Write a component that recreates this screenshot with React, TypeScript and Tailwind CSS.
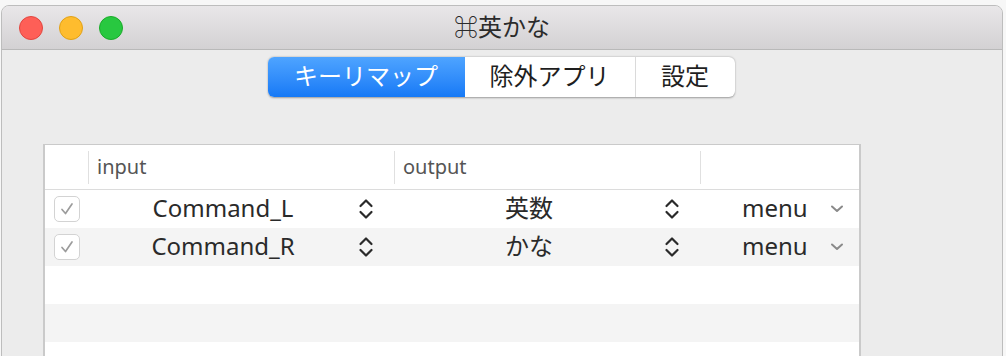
import React from "react";

const font = { fontFamily: '"Noto Sans", "Noto Sans CJK JP", sans-serif' };

function Stepper() {
  return (
    <svg width="16" height="28" viewBox="0 0 16 28" className="shrink-0">
      <path d="M2.5 11 L8 5.5 L13.5 11" fill="none" stroke="#2a2a2a" strokeWidth="2.2" strokeLinecap="round" strokeLinejoin="round" />
      <path d="M2.5 17 L8 22.5 L13.5 17" fill="none" stroke="#2a2a2a" strokeWidth="2.2" strokeLinecap="round" strokeLinejoin="round" />
    </svg>
  );
}

function Chevron() {
  return (
    <svg width="14" height="10" viewBox="0 0 14 10" className="shrink-0 ml-[22px]">
      <path d="M2 2.5 L7 7 L12 2.5" fill="none" stroke="#8a8a8a" strokeWidth="2" strokeLinecap="round" strokeLinejoin="round" />
    </svg>
  );
}

function Check() {
  return (
    <div className="w-[26px] h-[26px] rounded-[5px] border border-[#d3d3d3] bg-white flex items-center justify-center">
      <svg width="18" height="18" viewBox="0 0 18 18">
        <path d="M4 9.5 L7.5 13.5 L14 4" fill="none" stroke="#9c9c9c" strokeWidth="1.7" strokeLinecap="round" strokeLinejoin="round" />
      </svg>
    </div>
  );
}

function Row({ input, output, bg }: { input: string; output: string; bg: string }) {
  return (
    <div className={`flex h-[38px] items-center ${bg}`}>
      <div className="w-[43px] flex justify-center items-center">
        <Check />
      </div>
      <div className="w-[306px] flex items-center pr-[20px]">
        <div className="flex-1 text-center text-[24px] text-[#2a2a2a] pb-[2px]">{input}</div>
        <Stepper />
      </div>
      <div className="w-[306px] flex items-center pr-[20px]">
        <div className="flex-1 text-center text-[24px] text-[#2a2a2a] pb-[2px]">{output}</div>
        <Stepper />
      </div>
      <div className="flex-1 flex items-center pl-[42px]">
        <div className="text-[24px] text-[#2a2a2a] pb-[2px]">menu</div>
        <Chevron />
      </div>
    </div>
  );
}

export default function App() {
  return (
    <div className="w-[1006px] h-[356px] bg-[#f7f7f7] overflow-hidden pt-[5px] pl-[1px] pr-[3px]" style={font}>
      <div className="h-[400px] rounded-t-[8px] border border-[#bdbdbd] bg-[#ececec] overflow-hidden">
        <div className="h-[44px] bg-gradient-to-b from-[#e9e7e9] to-[#d3d1d3] border-b border-[#b9b9b9] relative flex items-center justify-center">
          <div className="absolute left-[17px] top-[10px] flex gap-[16px]">
            <div className="w-[24px] h-[24px] rounded-full bg-[#fe5f57] border border-[#e2463f]" />
            <div className="w-[24px] h-[24px] rounded-full bg-[#febc2e] border border-[#e1a116]" />
            <div className="w-[24px] h-[24px] rounded-full bg-[#28c840] border border-[#1aab29]" />
          </div>
          <div className="text-[24px] text-[#2b2b2b] pb-[1px]">⌘英かな</div>
        </div>
        <div className="flex justify-center pt-[7px] pr-[2px]">
          <div className="flex h-[40px] rounded-[6px] bg-white shadow-[0_0.5px_2px_rgba(0,0,0,0.35)] overflow-hidden text-[24px]">
            <div className="w-[197px] flex items-center justify-center text-white bg-gradient-to-b from-[#4ea4ff] to-[#1579f6] pb-[2px]">キーリマップ</div>
            <div className="w-[171px] flex items-center justify-center text-[#1e1e1e] border-r border-[#dadada] pb-[2px]">除外アプリ</div>
            <div className="w-[99px] flex items-center justify-center text-[#1e1e1e] pb-[2px]">設定</div>
          </div>
        </div>
        <div className="mt-[47px] ml-[41px] w-[818px] border-l-[2px] border-r-[2px] border-t border-[#cacaca] bg-white h-[300px]">
          <div className="h-[45px] flex items-center border-b border-[#dcdcdc] text-[20px] text-[#555]">
            <div className="w-[43px] h-[33px]" />
            <div className="w-[306px] h-[33px] border-l border-[#e0e0e0] flex items-center pl-[8px] pb-[1px]">input</div>
            <div className="w-[306px] h-[33px] border-l border-[#e0e0e0] flex items-center pl-[8px] pb-[1px]">output</div>
            <div className="flex-1 h-[33px] border-l border-[#e0e0e0]" />
          </div>
          <Row input="Command_L" output="英数" bg="bg-white" />
          <Row input="Command_R" output="かな" bg="bg-[#f4f4f4]" />
          <div className="h-[38px] bg-white" />
          <div className="h-[38px] bg-[#f4f4f4]" />
          <div className="h-[38px] bg-white" />
        </div>
      </div>
    </div>
  );
}
